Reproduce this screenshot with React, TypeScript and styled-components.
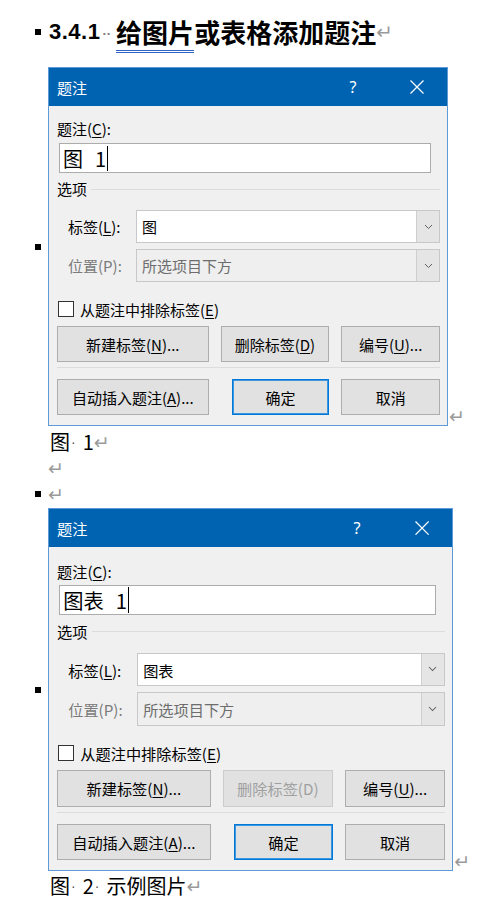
import React from "react";
import styled, { createGlobalStyle, css } from "styled-components";

const GlobalStyle = createGlobalStyle`
  html, body {
    margin: 0;
    padding: 0;
    background: #ffffff;
  }
  body {
    font-family: "Noto Sans CJK SC", "Noto Sans", sans-serif;
    color: #000;
  }
`;

const CJK = `"Noto Sans CJK SC", "Noto Sans", sans-serif`;

const Page = styled.div`
  width: 492px;
  padding-top: 12px;
  display: flex;
  flex-direction: column;
`;

const Para = styled.div<{ $top?: number }>`
  display: flex;
  align-items: center;
  margin-top: ${(p) => p.$top ?? 0}px;
`;

const Gutter = styled.div`
  width: 48px;
  flex-shrink: 0;
  align-self: stretch;
  display: flex;
  align-items: center;
  justify-content: flex-end;
  padding-right: 7px;
  box-sizing: border-box;
`;

const Bullet = styled.span`
  width: 6px;
  height: 6px;
  background: #000;
`;

const Mark = styled.span<{ $size?: number }>`
  color: #9a9a9a;
  font-family: "DejaVu Sans", sans-serif;
  font-size: ${(p) => p.$size ?? 19}px;
  line-height: 1;
`;

const HeadNum = styled.span`
  font-family: "Liberation Sans", Arial, sans-serif;
  font-weight: 700;
  font-size: 22px;
  margin-left: 1px;
  letter-spacing: 0.5px;
`;

const TabDots = styled.span`
  color: #7a7a7a;
  font-family: "Liberation Sans", sans-serif;
  font-weight: 700;
  font-size: 13px;
  margin: 2px 5px 0 2px;
  letter-spacing: 0;
`;

const HeadText = styled.span`
  font-family: ${CJK};
  font-weight: 700;
  font-size: 26px;
  line-height: 40px;
`;

const Squiggle = styled.span`
  border-bottom: 3px double #2f63c8;
`;

const HeadLine = styled.div`
  display: flex;
  align-items: center;
  height: 40px;
`;

const DialogPara = styled.div`
  display: flex;
  align-items: flex-end;
`;

const Dialog = styled.div<{ $zoom?: number }>`
  width: 400px;
  border: 1px solid #5d9ad6;
  box-sizing: border-box;
  background: #f0f0f0;
  font-family: ${CJK};
  font-size: 15px;
  color: #000;
  zoom: ${(p) => p.$zoom ?? 1};
`;

const TitleBar = styled.div`
  height: 38px;
  background: #0063b1;
  color: #fff;
  display: flex;
  align-items: center;
  padding: 0 7px 0 8px;
  font-size: 15px;
`;

const Title = styled.span`
  flex: 1;
`;

const TitleButton = styled.span<{ $gap?: number }>`
  width: 46px;
  height: 38px;
  margin-left: ${(p) => p.$gap ?? 0}px;
  display: flex;
  align-items: center;
  justify-content: center;
  font-family: "Noto Sans", sans-serif;
  font-size: 16px;
`;

const Body = styled.div`
  padding: 13px 7px 10px 7px;
  display: flex;
  flex-direction: column;
`;

const Label = styled.div`
  line-height: 20px;
  padding-left: 1px;
`;

const Key = styled.u`
  text-decoration-thickness: 1px;
  text-underline-offset: 2px;
`;

const CaptionInput = styled.div`
  margin: 4px 0 0 3px;
  width: 372px;
  height: 30px;
  box-sizing: border-box;
  border: 1px solid #acacac;
  background: #fff;
  display: flex;
  align-items: center;
  padding-left: 3px;
  font-size: 20px;
`;

const CaptionNumber = styled.span`
  margin-left: 12px;
`;

const Caret = styled.span`
  width: 1px;
  height: 25px;
  background: #000;
  margin-left: 1px;
`;

const GroupHead = styled.div`
  margin-top: 6px;
  display: flex;
  align-items: center;
  gap: 4px;
  line-height: 20px;
  padding-left: 1px;

  &::after {
    content: "";
    flex: 1;
    height: 1px;
    background: #dcdcdc;
  }
`;

const FieldRow = styled.div<{ $top: number }>`
  margin-top: ${(p) => p.$top}px;
  display: grid;
  grid-template-columns: 80px 1fr;
  align-items: center;
`;

const FieldLabel = styled.span<{ $disabled?: boolean }>`
  padding-left: 12px;
  color: ${(p) => (p.$disabled ? "#7a7a7a" : "#000")};
`;

const Select = styled.div<{ $disabled?: boolean }>`
  height: 33px;
  box-sizing: border-box;
  border: 1px solid #c8c8c8;
  background: ${(p) => (p.$disabled ? "#efefef" : "#fff")};
  color: ${(p) => (p.$disabled ? "#6d6d6d" : "#000")};
  display: flex;
  align-items: center;
`;

const SelectValue = styled.span`
  flex: 1;
  padding-left: 5px;
`;

const DropButton = styled.span`
  width: 22px;
  align-self: stretch;
  background: #e5e5e5;
  border-left: 1px solid #cfcfcf;
  display: flex;
  align-items: center;
  justify-content: center;
`;

const CheckRow = styled.div`
  margin-top: 19px;
  height: 16px;
  display: flex;
  align-items: center;
  gap: 6px;
  padding-left: 2px;
`;

const CheckBox = styled.span`
  width: 16px;
  height: 16px;
  box-sizing: border-box;
  border: 1px solid #333;
  background: #fff;
`;

const ButtonRow = styled.div<{ $top: number }>`
  margin-top: ${(p) => p.$top}px;
  display: flex;
  padding-left: 1px;
`;

const Button = styled.div<{ $w: number; $gap?: number; $default?: boolean; $disabled?: boolean }>`
  width: ${(p) => p.$w}px;
  margin-left: ${(p) => p.$gap ?? 0}px;
  height: 36px;
  box-sizing: border-box;
  background: #e1e1e1;
  border: 1px solid ${(p) => (p.$disabled ? "#cccccc" : "#adadad")};
  color: ${(p) => (p.$disabled ? "#a0a0a0" : "#000")};
  display: flex;
  align-items: center;
  justify-content: center;
  ${(p) =>
    p.$default &&
    css`
      border-color: #0078d7;
      box-shadow: inset 0 0 0 1px #3d97e0;
    `}
`;

const Separator = styled.div`
  margin: 5px 0 0 1px;
  height: 1px;
  background: #dcdcdc;
`;

const Caption = styled.div<{ $top: number }>`
  margin: ${(p) => p.$top}px 0 0 50px;
  font-family: ${CJK};
  font-size: 20px;
  line-height: 24px;
  display: flex;
  align-items: center;
`;

const SpaceDot = styled.span`
  color: #555;
  font-family: "Liberation Sans", sans-serif;
  font-size: 14px;
  margin: 0 7px 0 1px;
`;

const BlankPara = styled.div<{ $top: number }>`
  margin-top: ${(p) => p.$top}px;
  display: flex;
  align-items: center;
  height: 22px;
`;

const Chevron = () => (
  <svg width="9" height="6" viewBox="0 0 9 6">
    <path d="M1 1 L4.5 4.5 L8 1" fill="none" stroke="#606060" strokeWidth="1" />
  </svg>
);

const CloseIcon = () => (
  <svg width="14" height="14" viewBox="0 0 14 14">
    <path d="M0.5 0.5 L13.5 13.5 M13.5 0.5 L0.5 13.5" stroke="#fff" strokeWidth="1.2" />
  </svg>
);

type DialogProps = {
  zoom?: number;
  label: string;
  deleteDisabled?: boolean;
};

const CaptionDialog: React.FC<DialogProps> = ({ zoom, label, deleteDisabled }) => (
  <Dialog $zoom={zoom}>
    <TitleBar>
      <Title>题注</Title>
      <TitleButton>?</TitleButton>
      <TitleButton $gap={18}>
        <CloseIcon />
      </TitleButton>
    </TitleBar>
    <Body>
      <Label>
        题注(<Key>C</Key>):
      </Label>
      <CaptionInput>
        {label}
        <CaptionNumber>1</CaptionNumber>
        <Caret />
      </CaptionInput>
      <GroupHead>选项</GroupHead>
      <FieldRow $top={11}>
        <FieldLabel>
          标签(<Key>L</Key>):
        </FieldLabel>
        <Select>
          <SelectValue>{label}</SelectValue>
          <DropButton>
            <Chevron />
          </DropButton>
        </Select>
      </FieldRow>
      <FieldRow $top={6}>
        <FieldLabel $disabled>位置(P):</FieldLabel>
        <Select $disabled>
          <SelectValue>所选项目下方</SelectValue>
          <DropButton>
            <Chevron />
          </DropButton>
        </Select>
      </FieldRow>
      <CheckRow>
        <CheckBox />
        <span>
          从题注中排除标签(<Key>E</Key>)
        </span>
      </CheckRow>
      <ButtonRow $top={9}>
        <Button $w={152}>
          新建标签(<Key>N</Key>)...
        </Button>
        <Button $w={109} $gap={12} $disabled={deleteDisabled}>
          删除标签({deleteDisabled ? "D" : <Key>D</Key>})
        </Button>
        <Button $w={99} $gap={12}>
          编号(<Key>U</Key>)...
        </Button>
      </ButtonRow>
      <Separator />
      <ButtonRow $top={11}>
        <Button $w={152}>
          自动插入题注(<Key>A</Key>)...
        </Button>
        <Button $w={98} $gap={23} $default>
          确定
        </Button>
        <Button $w={99} $gap={12}>
          取消
        </Button>
      </ButtonRow>
    </Body>
  </Dialog>
);

const App: React.FC = () => (
  <>
    <GlobalStyle />
    <Page>
      <Para>
        <Gutter>
          <Bullet />
        </Gutter>
        <HeadLine>
          <HeadNum>3.4.1</HeadNum>
          <TabDots>··</TabDots>
          <HeadText>
            <Squiggle>给图片</Squiggle>或表格添加题注
          </HeadText>
          <Mark $size={20}>↵</Mark>
        </HeadLine>
      </Para>

      <Para $top={15}>
        <Gutter>
          <Bullet />
        </Gutter>
        <DialogPara>
          <CaptionDialog label="图" />
          <Mark style={{ marginLeft: 1 }}>↵</Mark>
        </DialogPara>
      </Para>

      <Caption $top={4}>
        图<SpaceDot>·</SpaceDot>1<Mark>↵</Mark>
      </Caption>

      <BlankPara $top={3}>
        <Gutter />
        <Mark>↵</Mark>
      </BlankPara>

      <BlankPara $top={4}>
        <Gutter>
          <Bullet />
        </Gutter>
        <Mark>↵</Mark>
      </BlankPara>

      <Para $top={3}>
        <Gutter>
          <Bullet />
        </Gutter>
        <DialogPara>
          <CaptionDialog zoom={1.013} label="图表" deleteDisabled />
          <Mark style={{ marginLeft: 1 }}>↵</Mark>
        </DialogPara>
      </Para>

      <Caption $top={3}>
        图<SpaceDot>·</SpaceDot>2<SpaceDot>·</SpaceDot>示例图片<Mark>↵</Mark>
      </Caption>
    </Page>
  </>
);

export default App;
